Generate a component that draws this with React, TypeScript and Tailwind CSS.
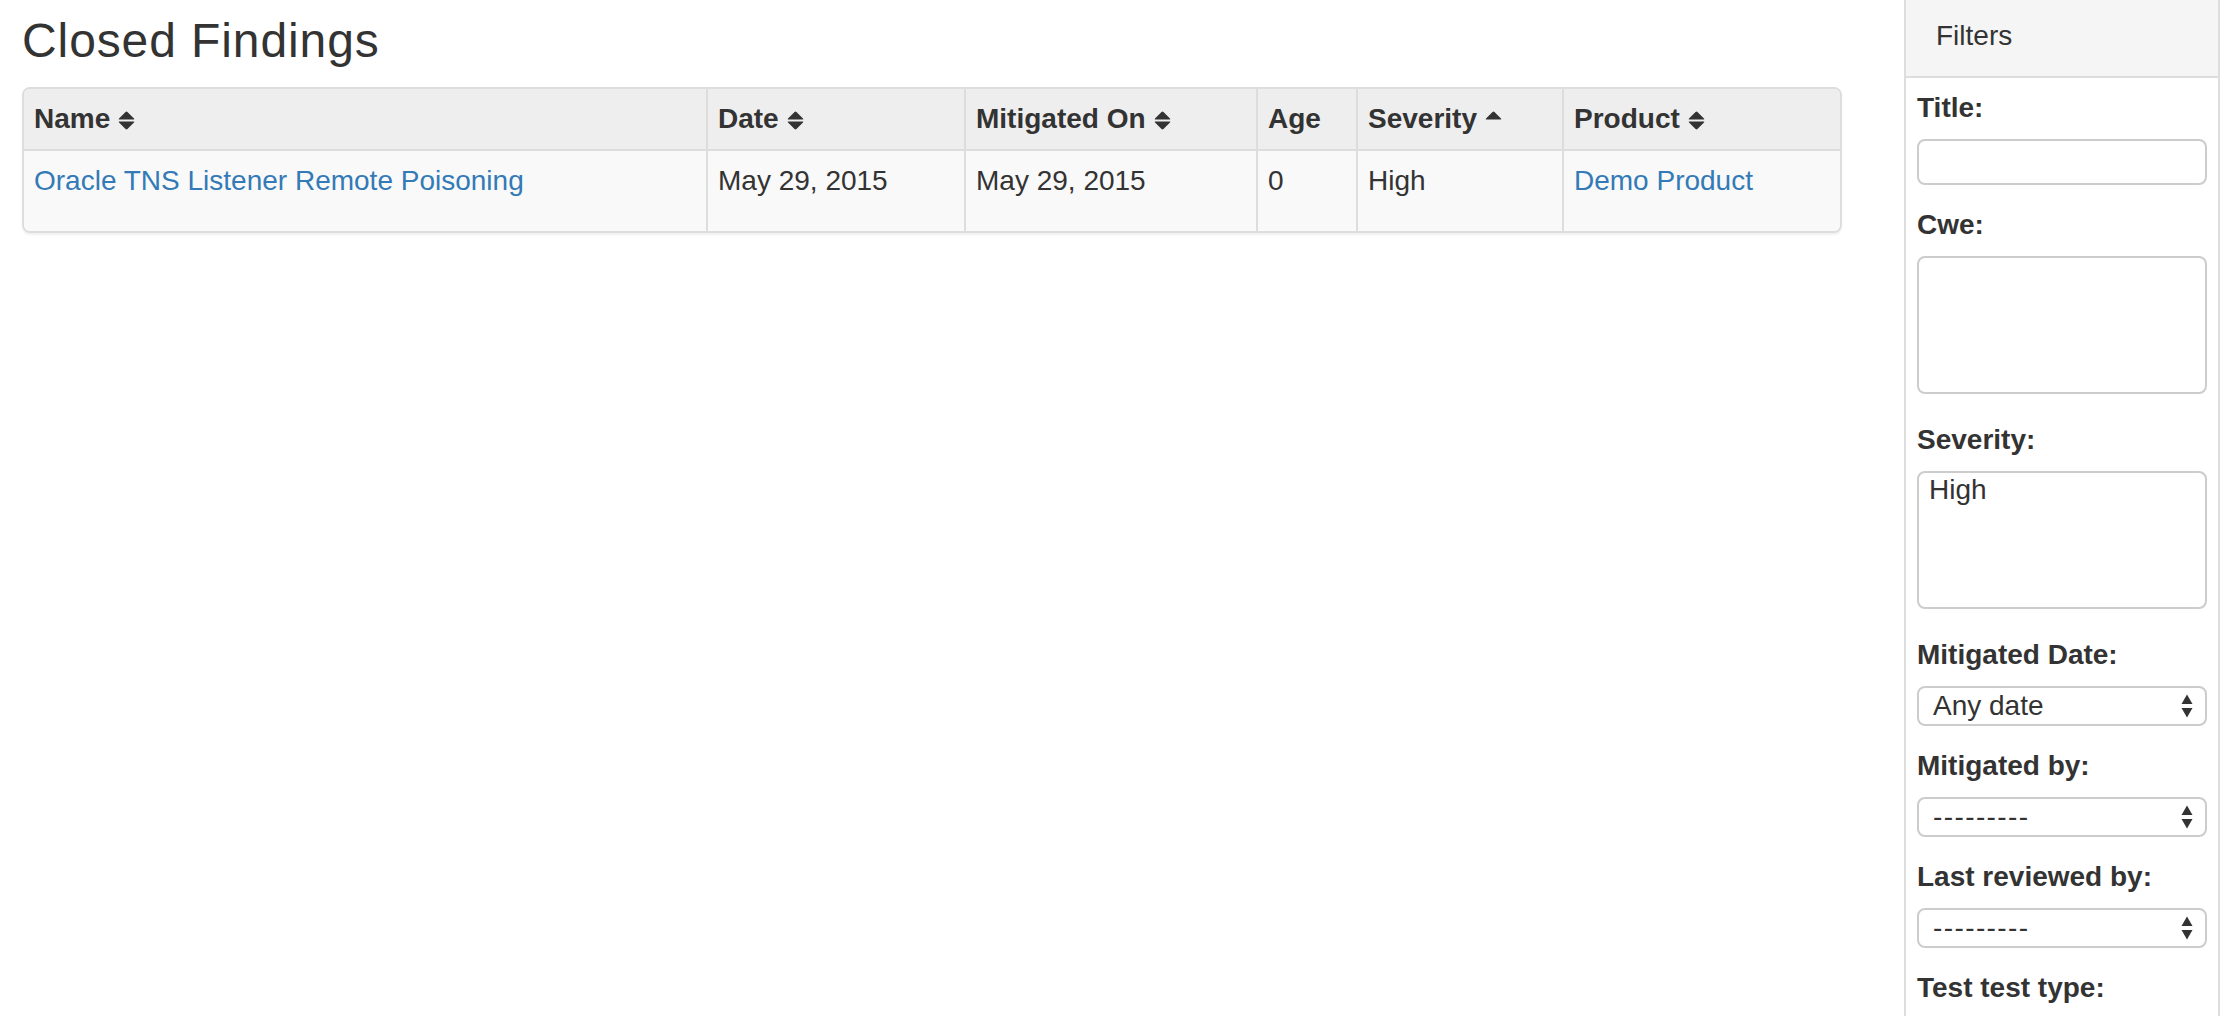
import * as React from "react";

type Column = {
  label: string;
  width: string;
  sort: "both" | "asc" | "none";
  last?: boolean;
};

const columns: Column[] = [
  { label: "Name", width: "w-[684px]", sort: "both" },
  { label: "Date", width: "w-[258px]", sort: "both" },
  { label: "Mitigated On", width: "w-[292px]", sort: "both" },
  { label: "Age", width: "w-[100px]", sort: "none" },
  { label: "Severity", width: "w-[206px]", sort: "asc" },
  { label: "Product", width: "w-[276px]", sort: "both", last: true },
];

function SortIcon({ kind }: { kind: "both" | "asc" }) {
  return (
    <svg
      width="17"
      height="19"
      viewBox="0 0 16 18"
      className="mt-[4px] shrink-0"
      fill="#333333"
    >
      <path d="M0.9 7.1 L7.1 0.9 Q8 0 8.9 0.9 L15.1 7.1 Q16 8 14.7 8 L1.3 8 Q0 8 0.9 7.1 Z" />
      {kind === "both" && (
        <path d="M0.9 10.9 L7.1 17.1 Q8 18 8.9 17.1 L15.1 10.9 Q16 10 14.7 10 L1.3 10 Q0 10 0.9 10.9 Z" />
      )}
    </svg>
  );
}

function SelectArrows() {
  return (
    <svg width="12" height="24" viewBox="0 0 12 24" fill="#333333">
      <path d="M0.5 10 L6 0.5 L11.5 10 Z" />
      <path d="M0.5 14 L11.5 14 L6 23.5 Z" />
    </svg>
  );
}

function FakeSelect({ value, dashes }: { value: string; dashes?: boolean }) {
  return (
    <div className="flex h-[40px] w-full items-center justify-between rounded-[8px] border-2 border-[#cccccc] bg-white pl-[14px] pr-[12px]">
      <span
        className={
          dashes
            ? "text-[28px] leading-[36px] tracking-[1.4px] text-[#333333]"
            : "text-[28px] leading-[36px] text-[#333333]"
        }
      >
        {value}
      </span>
      <SelectArrows />
    </div>
  );
}

function Label({ children }: { children: React.ReactNode }) {
  return (
    <label className="mb-[11px] block text-[28px] font-bold leading-[40px] text-[#333333]">
      {children}
    </label>
  );
}

export default function App() {
  return (
    <div className="flex min-h-screen bg-white font-['Liberation_Sans',Arial,sans-serif] text-[#333333]">
      {/* Main content */}
      <div className="flex-1 pl-[22px] pr-[62px]">
        <h3 className="mt-[15px] mb-[19px] text-[48px] font-normal leading-[1.1] tracking-[0.9px] text-[#333333]">
          Closed Findings
        </h3>

        <div className="overflow-hidden rounded-[8px] border-2 border-[#dddddd] shadow-[0_2px_2px_rgba(0,0,0,0.06)]">
          <table className="w-full table-fixed border-separate border-spacing-0 text-[28px] leading-[40px]">
            <thead>
              <tr className="bg-[#eeeeee]">
                {columns.map((col) => (
                  <th
                    key={col.label}
                    className={
                      col.width +
                      " border-b-2 border-[#dddddd] px-[10px] py-[10px] text-left font-bold " +
                      (col.last ? "" : "border-r-2")
                    }
                  >
                    <span className="inline-flex items-center gap-[8px]">
                      <span>{col.label}</span>
                      {col.sort !== "none" && <SortIcon kind={col.sort} />}
                    </span>
                  </th>
                ))}
              </tr>
            </thead>
            <tbody>
              <tr className="bg-[#f9f9f9] align-top">
                <td className="border-r-2 border-[#dddddd] px-[10px] pt-[10px] pb-[30px]">
                  <a href="#" className="text-[#337ab7]">
                    Oracle TNS Listener Remote Poisoning
                  </a>
                </td>
                <td className="border-r-2 border-[#dddddd] px-[10px] pt-[10px] pb-[30px]">
                  May 29, 2015
                </td>
                <td className="border-r-2 border-[#dddddd] px-[10px] pt-[10px] pb-[30px]">
                  May 29, 2015
                </td>
                <td className="border-r-2 border-[#dddddd] px-[10px] pt-[10px] pb-[30px]">
                  0
                </td>
                <td className="border-r-2 border-[#dddddd] px-[10px] pt-[10px] pb-[30px]">
                  High
                </td>
                <td className="px-[10px] pt-[10px] pb-[30px]">
                  <a href="#" className="text-[#337ab7]">
                    Demo Product
                  </a>
                </td>
              </tr>
            </tbody>
          </table>
        </div>
      </div>

      {/* Filters sidebar */}
      <aside className="mr-[12px] w-[316px] shrink-0 border-x-2 border-[#dddddd] bg-white">
        <div className="border-b-2 border-[#dddddd] bg-[#f5f5f5] pl-[30px] pt-[16px] pb-[20px] text-[28px] leading-[40px] text-[#333333]">
          Filters
        </div>

        <div className="px-[11px] pt-[10px]">
          <div className="mb-[20px]">
            <Label>Title:</Label>
            <input
              type="text"
              className="block h-[46px] w-full rounded-[8px] border-2 border-[#cccccc] bg-white px-[12px] text-[28px] outline-none"
            />
          </div>

          <div className="mb-[26px]">
            <Label>Cwe:</Label>
            <textarea className="block h-[138px] w-full resize-none rounded-[8px] border-2 border-[#cccccc] bg-white px-[12px] text-[28px] outline-none" />
          </div>

          <div className="mb-[26px]">
            <Label>Severity:</Label>
            <div
              role="listbox"
              className="h-[138px] w-full rounded-[8px] border-2 border-[#cccccc] bg-white px-[10px] pt-[1px]"
            >
              <div className="text-[28px] leading-[32px] text-[#333333]">High</div>
            </div>
          </div>

          <div className="mb-[20px]">
            <Label>Mitigated Date:</Label>
            <FakeSelect value="Any date" />
          </div>

          <div className="mb-[20px]">
            <Label>Mitigated by:</Label>
            <FakeSelect value="---------" dashes />
          </div>

          <div className="mb-[20px]">
            <Label>Last reviewed by:</Label>
            <FakeSelect value="---------" dashes />
          </div>

          <div>
            <Label>Test test type:</Label>
          </div>
        </div>
      </aside>
    </div>
  );
}
